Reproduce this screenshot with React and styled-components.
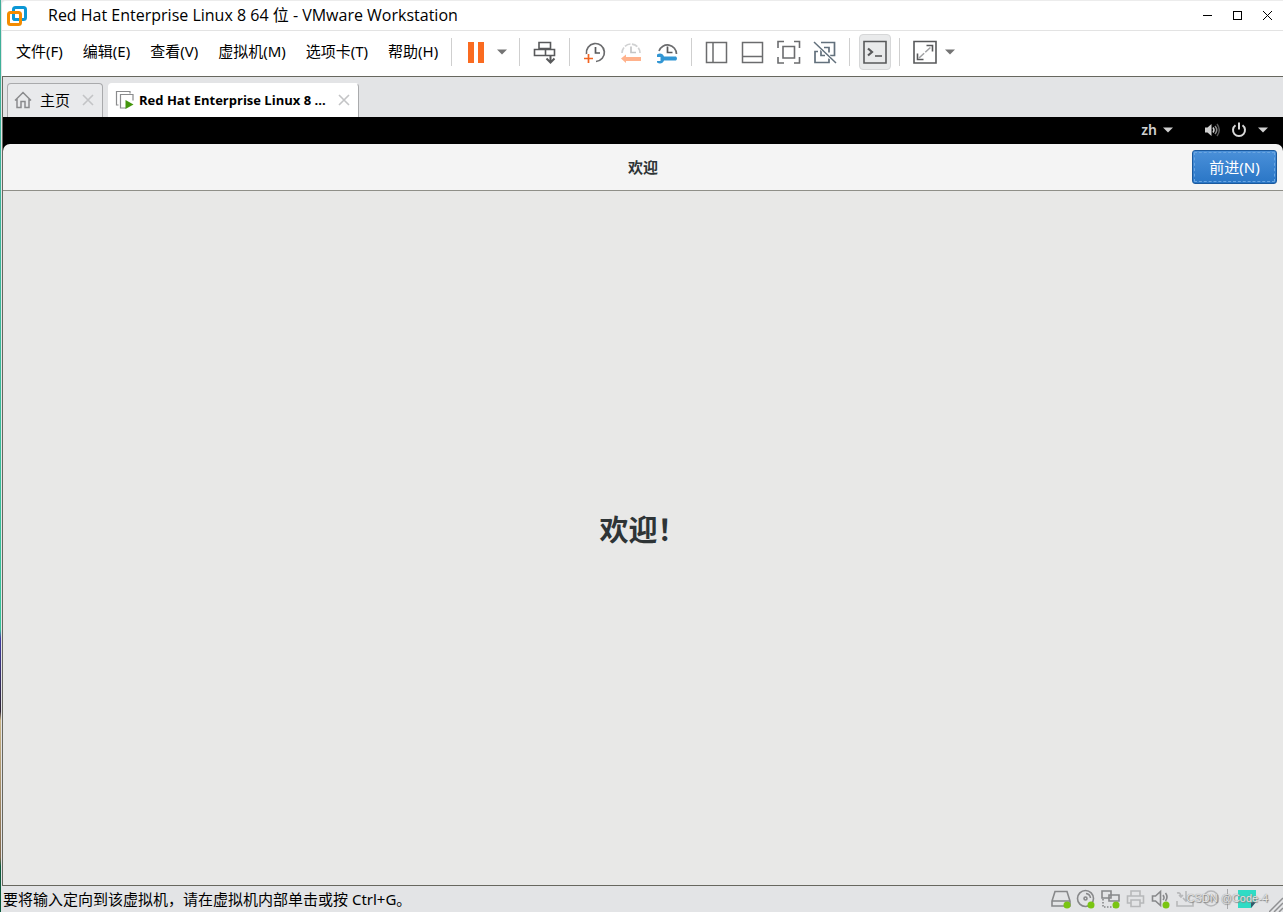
import { useState } from "react";
import styled, { createGlobalStyle } from "styled-components";

const menus = ["文件(F)", "编辑(E)", "查看(V)", "虚拟机(M)", "选项卡(T)", "帮助(H)"];

export default function App() {
  const [tab, setTab] = useState("vm");
  const [consoleView, setConsoleView] = useState(true);

  return (
    <Desktop>
      <GlobalStyle />
      <Window>
        <TitleBar>
          <Logo />
          <Title>Red Hat Enterprise Linux 8 64 位 - VMware Workstation</Title>
          <WindowButtons>
            <WindowButton aria-label="最小化">
              <svg width="11" height="11" viewBox="0 0 11 11" shapeRendering="crispEdges">
                <path d="M1 5.500h9" stroke="#000" />
              </svg>
            </WindowButton>
            <WindowButton aria-label="最大化">
              <svg width="11" height="11" viewBox="0 0 11 11" shapeRendering="crispEdges">
                <path d="M1.500 1.500h8v8h-8z" fill="none" stroke="#000" />
              </svg>
            </WindowButton>
            <WindowButton aria-label="关闭">
              <svg width="11" height="11" viewBox="0 0 11 11">
                <path d="M1 1l9 9M10 1l-9 9" stroke="#000" />
              </svg>
            </WindowButton>
          </WindowButtons>
        </TitleBar>

        <MenuBar>
          <MenuList>
            {menus.map((label) => (
              <MenuItem key={label}>{label}</MenuItem>
            ))}
          </MenuList>
          <Separator />
          <SplitButton>
            <ToolButton aria-label="挂起">
              <PauseIcon />
            </ToolButton>
            <CaretButton aria-label="电源选项">
              <Caret />
            </CaretButton>
          </SplitButton>
          <Separator />
          <ToolButton aria-label="发送 Ctrl+Alt+Del">
            <SendKeysIcon />
          </ToolButton>
          <Separator />
          <ToolButton aria-label="拍摄快照">
            <SnapshotIcon />
          </ToolButton>
          <ToolButton aria-label="恢复快照" disabled>
            <RevertIcon />
          </ToolButton>
          <ToolButton aria-label="管理快照">
            <ManageIcon />
          </ToolButton>
          <Separator />
          <ToolButton aria-label="显示库">
            <LibraryIcon />
          </ToolButton>
          <ToolButton aria-label="显示缩略图">
            <ThumbnailIcon />
          </ToolButton>
          <ToolButton aria-label="全屏">
            <FullscreenIcon />
          </ToolButton>
          <ToolButton aria-label="Unity">
            <UnityIcon />
          </ToolButton>
          <Separator />
          <ToolButton
            aria-label="控制台视图"
            $active={consoleView}
            onClick={() => setConsoleView(!consoleView)}
          >
            <ConsoleIcon />
          </ToolButton>
          <Separator />
          <SplitButton>
            <ToolButton aria-label="自由拉伸">
              <StretchIcon />
            </ToolButton>
            <CaretButton aria-label="拉伸选项">
              <Caret />
            </CaretButton>
          </SplitButton>
        </MenuBar>

        <TabBar>
          <Tab $active={tab === "home"}>
            <TabLabel onClick={() => setTab("home")}>
              <HomeIcon />
              主页
            </TabLabel>
            <CloseButton aria-label="关闭主页">
              <CloseIcon />
            </CloseButton>
          </Tab>
          <Tab $active={tab === "vm"}>
            <TabLabel $bold onClick={() => setTab("vm")}>
              <RunningIcon />
              Red Hat Enterprise Linux 8 ...
            </TabLabel>
            <CloseButton aria-label="关闭虚拟机">
              <CloseIcon />
            </CloseButton>
          </Tab>
        </TabBar>

        <Guest>
          <TopPanel>
            <PanelButton $gap="6px">
              zh
              <PanelCaret />
            </PanelButton>
            <PanelButton $gap="11px" aria-label="系统菜单">
              <VolumeIcon />
              <PowerIcon />
              <PanelCaret />
            </PanelButton>
          </TopPanel>
          <HeaderBar>
            <HeaderTitle>欢迎</HeaderTitle>
            <NextButton>前进(N)</NextButton>
          </HeaderBar>
          <Setup>
            <Welcome>欢迎！</Welcome>
          </Setup>
        </Guest>

        <StatusBar>
          <StatusText>要将输入定向到该虚拟机，请在虚拟机内部单击或按 Ctrl+G。</StatusText>
          <Devices />
          <Watermark>CSDN @Code-4</Watermark>
        </StatusBar>
      </Window>
    </Desktop>
  );
}

function Logo() {
  return (
    <svg width="20" height="20" viewBox="0 0 20 20" fill="none" strokeWidth="3">
      <rect x="6.500" y="1.500" width="12" height="12" rx="2" stroke="#0c97d5" />
      <rect x="1.500" y="6.500" width="12" height="12" rx="2" stroke="#f38b00" />
      <path d="M6.500 8v3.500a2 2 0 0 0 2 2H12" stroke="#0c97d5" />
    </svg>
  );
}

function Caret() {
  return (
    <svg width="10" height="6" viewBox="0 0 10 6">
      <path d="M0 0.500h10L5 5.500z" fill="#747474" />
    </svg>
  );
}

function PauseIcon() {
  return (
    <svg width="24" height="24" viewBox="0 0 24 24" fill="#fa6b20">
      <path d="M3 2h6v21H3zM13 2h6v21h-6z" />
    </svg>
  );
}

function SendKeysIcon() {
  return (
    <svg width="24" height="24" viewBox="0 0 24 24" fill="none" stroke="#58595b" strokeWidth="1.600">
      <path d="M6 2.500h11.500v6H6zM1.500 9.500h11v6h-11zM12.500 9.500h9v6h-9z" />
      <path d="M17.500 15v7M13.500 18.500l4 4 4-4" strokeWidth="2" />
    </svg>
  );
}

function SnapshotIcon() {
  return (
    <svg width="24" height="24" viewBox="0 0 24 24" fill="none" strokeWidth="1.700">
      <path d="M3.500 14A9 9 0 1 1 13 21.500" stroke="#6b6c6e" />
      <path d="M12.500 7v6h4.500" stroke="#58595b" />
      <path d="M5.500 14v9M1 18.500h9" stroke="#f26522" />
    </svg>
  );
}

function RevertIcon() {
  return (
    <svg width="24" height="24" viewBox="0 0 24 24" fill="none" strokeWidth="1.700">
      <path d="M3 13a9 9 0 0 1 18 0" stroke="#d0d1d2" strokeDasharray="6 1.500" />
      <path d="M12 6.500v6h5" stroke="#c4c5c6" />
      <path d="M2 18.500l5-4v2.500h15v4H7v2z" fill="#ffb28c" />
    </svg>
  );
}

function ManageIcon() {
  return (
    <svg width="24" height="24" viewBox="0 0 24 24" fill="none" strokeWidth="1.700">
      <path d="M4 11a9 9 0 0 1 17.500 3" stroke="#6b6c6e" />
      <path d="M12.500 6.500v6h5" stroke="#58595b" />
      <path
        d="M2 14.500c3-2 6-.8 7 2h12q2 2 0 4H9c-1 2.800-4 4-7 2v-1.500h3.500v-4H2z"
        fill="#3196d4"
      />
    </svg>
  );
}

function LibraryIcon() {
  return (
    <svg width="24" height="24" viewBox="0 0 24 24" fill="none" stroke="#6b6c6e" strokeWidth="1.500">
      <path d="M1.500 2.500h20v20h-20zM8 2.500v20" />
    </svg>
  );
}

function ThumbnailIcon() {
  return (
    <svg width="24" height="24" viewBox="0 0 24 24" fill="none" stroke="#6b6c6e" strokeWidth="1.500">
      <path d="M1.500 2.500h20v20h-20zM1.500 16.500h20" />
    </svg>
  );
}

function FullscreenIcon() {
  return (
    <svg width="24" height="24" viewBox="0 0 24 24" fill="none" stroke="#6b6c6e" strokeWidth="1.600">
      <path d="M1 8V1.500h6M17 1.500h5.500V8M22.500 17v6H17M7 23H1v-6M6 6.500h11.500v11.500H6z" />
    </svg>
  );
}

function UnityIcon() {
  return (
    <svg width="24" height="24" viewBox="0 0 24 24" fill="none" stroke="#62707c" strokeWidth="1.700">
      <path d="M8 2.500h13.500v13H17M5 11.500H2v11h14v-4M8 8v7.500h4M11 7.500h5v5" />
      <path d="M1 2l22 21" stroke="#fff" strokeWidth="3" />
      <path d="M1 2l22 21" strokeWidth="1.500" />
    </svg>
  );
}

function ConsoleIcon() {
  return (
    <svg width="24" height="24" viewBox="0 0 24 24" fill="none" stroke="#58595b" strokeWidth="1.600">
      <path d="M1 1.500h22v21.500H1z" />
      <path d="M5 8.500l4 3.500-4 3.500" strokeWidth="2.200" />
      <path d="M12 16h7" />
    </svg>
  );
}

function StretchIcon() {
  return (
    <svg width="24" height="24" viewBox="0 0 24 24" fill="none" stroke="#58595b" strokeWidth="1.600">
      <path d="M1 1.500h22v21.500H1z" />
      <path d="M13.500 5.500h6v6M4.500 13.500v6h6" />
      <path d="M6 18L18 7" stroke="#a2a3a5" strokeDasharray="7 1.500" />
    </svg>
  );
}

function HomeIcon() {
  return (
    <svg width="18" height="18" viewBox="0 0 18 18" fill="none" stroke="#8a8b8d" strokeWidth="1.500">
      <path d="M1 9.500L9 1.500l8 8M3 8v8.500h4v-6h4v6h4V8" />
    </svg>
  );
}

function RunningIcon() {
  return (
    <svg width="20" height="20" viewBox="0 0 20 20" fill="none" stroke="#8a8b8d" strokeWidth="1.200">
      <path d="M3.500 15H1.500V1.500H15v2" />
      <path d="M11 18H5.500V4.500H18v6" />
      <path d="M10.500 10l8 4.500-8 4.500z" fill="#43960c" stroke="none" />
    </svg>
  );
}

function CloseIcon() {
  return (
    <svg width="12" height="12" viewBox="0 0 12 12" stroke="#c3c4c6" strokeWidth="1.600">
      <path d="M1 1l10 10M11 1L1 11" />
    </svg>
  );
}

function PanelCaret() {
  return (
    <svg width="10" height="6" viewBox="0 0 10 6">
      <path d="M0 0.500h10L5 5.500z" fill="#d0d0d0" />
    </svg>
  );
}

function VolumeIcon() {
  return (
    <svg width="16" height="16" viewBox="0 0 16 16" fill="none" strokeWidth="1.500">
      <path d="M1 5.500h2.500L7.500 2v12L3.500 10.500H1z" fill="#d0d0d0" />
      <path d="M9 5.500q2 2.500 0 5" stroke="#d0d0d0" />
      <path d="M11 4q3.500 4 0 8" stroke="#8a8a8a" />
      <path d="M13 2q4.500 6 0 12" stroke="#555" />
    </svg>
  );
}

function PowerIcon() {
  return (
    <svg width="16" height="16" viewBox="0 0 16 16" fill="none" stroke="#d8d8d8" strokeWidth="2">
      <path d="M4.500 3.200a6 6 0 1 0 7 0M8 0.500v7" />
    </svg>
  );
}

function Devices() {
  return (
    <DeviceList>
      <svg width="20" height="20" viewBox="0 0 20 20" fill="none" stroke="#87888a" strokeWidth="1.600">
        <path d="M4 2.500h12l3 9.500v5H1v-5zM1 12h18" />
        <circle cx="16" cy="16" r="3.500" fill="#7ac512" stroke="none" />
      </svg>
      <svg width="20" height="20" viewBox="0 0 20 20" fill="none" stroke="#87888a" strokeWidth="1.600">
        <circle cx="9.500" cy="9.500" r="8" />
        <circle cx="9.500" cy="9.500" r="1.500" />
        <path d="M10 4.500q4 .5 4.500 4.500" />
        <circle cx="15" cy="16" r="3.500" fill="#7ac512" stroke="none" />
      </svg>
      <svg width="20" height="20" viewBox="0 0 20 20" fill="none" stroke="#87888a" strokeWidth="1.600">
        <path d="M1 2h9v7H1zM8 6h10v6H8z" />
        <path d="M2 10v8h11" strokeDasharray="1.500 1.500" />
        <circle cx="15" cy="16" r="3.500" fill="#7ac512" stroke="none" />
      </svg>
      <svg width="20" height="20" viewBox="0 0 20 20" fill="none" stroke="#b7b8ba" strokeWidth="1.600">
        <path d="M5 7V2h9v5M5 14H1.500V7h16v7H14M5 11h9v6.500H5z" />
      </svg>
      <svg width="20" height="20" viewBox="0 0 20 20" fill="none" stroke="#87888a" strokeWidth="1.600">
        <path d="M1.500 7h3l5-4.500v14L4.500 12h-3zM12 6q2 2.500 0 5M14.500 4q3 4 0 8" />
        <circle cx="15" cy="16" r="3.500" fill="#7ac512" stroke="none" />
      </svg>
      <svg width="20" height="20" viewBox="0 0 20 20" fill="none" stroke="#b7b8ba" strokeWidth="1.600">
        <path d="M1 12v5h16v-5M10 2v10M7 9l3 3 3-3M1 4q4-1 4 4M3 6l2 2 2-2" />
      </svg>
      <svg width="20" height="20" viewBox="0 0 20 20" fill="none" stroke="#b7b8ba" strokeWidth="1.600">
        <circle cx="10" cy="9.500" r="7.500" />
        <circle cx="10" cy="9.500" r="2.500" />
      </svg>
      <DeviceDivider />
      <svg width="20" height="20" viewBox="0 0 20 20">
        <path d="M1 1h18v12l-5 6H1z" fill="#2fdcc5" />
        <path d="M19 13l-5 6v-6z" fill="#35586a" />
      </svg>
      <ResizeGrip>
        <svg width="14" height="20" viewBox="0 0 14 20" stroke="#8f9092" strokeWidth="1.500">
          <path d="M0 20L14 6M5 20l9-9M10 20l4-4" />
        </svg>
      </ResizeGrip>
    </DeviceList>
  );
}

const GlobalStyle = createGlobalStyle`
  * {
    box-sizing: border-box;
  }
  body {
    margin: 0;
    font-family: "Noto Sans", "Noto Sans CJK SC", sans-serif;
    font-size: 15px;
    color: #000;
  }
  button {
    font: inherit;
    color: inherit;
    background: none;
    border: 0;
    padding: 0;
  }
  svg {
    display: block;
    flex: none;
  }
`;

const Desktop = styled.div`
  min-height: 100vh;
  display: flex;
  padding-left: 1px;
  background: linear-gradient(
    #3fae98 0,
    #35c49a 69%,
    #3f3aa0 70%,
    #2d2433 78%,
    #c9b384 79%,
    #80664a 94%,
    #0a5a3a 95%
  );
`;

const Window = styled.div`
  flex: 1;
  min-width: 0;
  display: flex;
  flex-direction: column;
  background: #e3e4e6;
  border-left: 1px solid #e3e4e6;
`;

const TitleBar = styled.header`
  height: 31px;
  display: flex;
  align-items: center;
  padding: 0 1px 0 5px;
  background: #fff;
  border-top: 1px solid #ececec;
  border-bottom: 1px solid #e3e3e3;
  border-top-left-radius: 4px;
`;

const Title = styled.h1`
  flex: 1;
  margin: 0 0 0 21px;
  padding-bottom: 2px;
  font-family: "Open Sans", "Noto Sans CJK SC", sans-serif;
  font-size: 16px;
  font-weight: 400;
  line-height: 26px;
`;

const WindowButtons = styled.div`
  display: flex;
`;

const WindowButton = styled.button`
  width: 30px;
  height: 28px;
  display: flex;
  align-items: center;
  justify-content: center;
`;

const MenuBar = styled.nav`
  height: 46px;
  display: flex;
  align-items: center;
  padding: 0 0 4px 14px;
  background: #fff;
  border-bottom: 1px solid #67675f;
`;

const MenuList = styled.div`
  display: flex;
  gap: 20px;
  padding: 0 7px 2px 0;
`;

const MenuItem = styled.button`
  line-height: 24px;
  white-space: nowrap;
`;

const Separator = styled.span`
  width: 1px;
  height: 28px;
  margin: 0 7px 0 6px;
  background: #cfcfcf;
`;

const SplitButton = styled.div`
  display: flex;
  padding-right: 5px;
`;

const ToolButton = styled.button`
  width: 32px;
  height: 36px;
  margin: 0 2px;
  display: flex;
  align-items: center;
  justify-content: center;
  border: 1px solid ${({ $active }) => ($active ? "#d6d7d8" : "transparent")};
  border-radius: 4px;
  background: ${({ $active }) => ($active ? "#e9eaeb" : "transparent")};
`;

const CaretButton = styled.button`
  width: 13px;
  display: flex;
  align-items: center;
  justify-content: center;
`;

const TabBar = styled.div`
  height: 40px;
  display: flex;
  align-items: flex-end;
  gap: 5px;
  padding-left: 4px;
  border-left: 1px solid #67675f;
`;

const Tab = styled.div`
  height: 34px;
  display: flex;
  align-items: center;
  gap: 12px;
  padding: 0 8px 1px 6px;
  background: ${({ $active }) => ($active ? "#fff" : "#e9eaec")};
  border: 1px solid ${({ $active }) => ($active ? "#fff" : "#a9aaac")};
  border-right-color: #a9aaac;
  border-bottom: 0;
  border-radius: 4px 4px 0 0;
`;

const TabLabel = styled.button`
  display: flex;
  align-items: center;
  gap: ${({ $bold }) => ($bold ? "4px" : "8px")};
  font-family: "Open Sans", "Noto Sans CJK SC", sans-serif;
  font-size: ${({ $bold }) => ($bold ? "13px" : "15px")};
  font-weight: ${({ $bold }) => ($bold ? 700 : 400)};
  line-height: 20px;
  white-space: nowrap;
`;

const CloseButton = styled.button`
  flex: none;
`;

const Guest = styled.main`
  flex: 1;
  display: flex;
  flex-direction: column;
  background: #000;
  border-left: 1px solid #67675f;
  border-bottom: 1px solid #67675f;
`;

const TopPanel = styled.div`
  height: 27px;
  display: flex;
  align-items: center;
  justify-content: flex-end;
  gap: 31px;
  padding: 0 15px 2px 0;
`;

const PanelButton = styled.button`
  display: flex;
  align-items: center;
  gap: ${({ $gap }) => $gap};
  color: #d0d0d0;
  font-size: 14px;
  font-weight: 600;
  line-height: 20px;
`;

const HeaderBar = styled.div`
  height: 47px;
  display: grid;
  grid-template-columns: 1fr auto 1fr;
  align-items: center;
  padding: 0 6px;
  color: #2e3436;
  background: #f4f4f4;
  border-bottom: 1px solid #8f8f88;
  border-radius: 7px 7px 0 0;
`;

const HeaderTitle = styled.h2`
  grid-column: 2;
  margin: 0;
  font-size: 15px;
  font-weight: 700;
  line-height: 24px;
`;

const NextButton = styled.button`
  justify-self: end;
  width: 85px;
  height: 34px;
  padding-bottom: 2px;
  color: #fff;
  background: linear-gradient(#4a90d9, #2a76c6);
  border: 1px solid #1b5a9e;
  border-radius: 3px;
  outline: 1px dashed #6aa5e0;
  outline-offset: -3px;
`;

const Setup = styled.section`
  flex: 1;
  display: flex;
  align-items: center;
  justify-content: center;
  padding-bottom: 16px;
  background: #e8e8e7;
`;

const Welcome = styled.p`
  margin: 0;
  color: #2e3436;
  font-size: 29px;
  font-weight: 700;
  line-height: 40px;
`;

const StatusBar = styled.footer`
  position: relative;
  height: 26px;
  display: flex;
  align-items: center;
  justify-content: space-between;
`;

const StatusText = styled.span`
  padding-left: 1px;
  line-height: 24px;
  white-space: nowrap;
`;

const DeviceList = styled.div`
  display: flex;
  align-items: center;
  gap: 5px;
`;

const DeviceDivider = styled.span`
  width: 1px;
  height: 20px;
  margin: 0 4px 0 1px;
  background: #a9aaac;
`;

const ResizeGrip = styled.span`
  padding: 6px 0 0 7px;
`;

const Watermark = styled.span`
  position: absolute;
  right: 15px;
  top: 4px;
  color: #e6e6e6;
  font-family: "Liberation Sans", sans-serif;
  font-size: 11px;
  line-height: 16px;
  text-shadow: 0 0 1px #777, 1px 1px 1px #888;
`;
